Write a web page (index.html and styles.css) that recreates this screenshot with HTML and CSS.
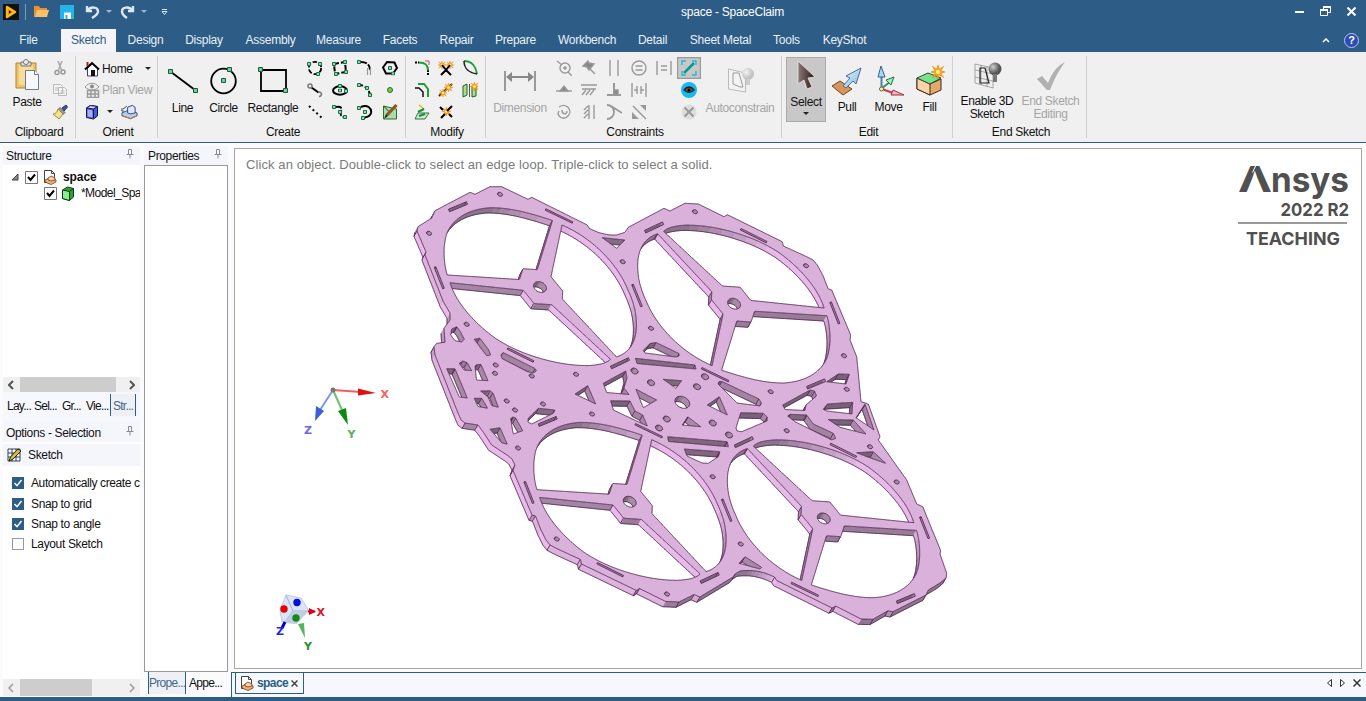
FILE: index.html
```html
<!DOCTYPE html>
<html lang="en">
<head>
<meta charset="utf-8">
<title>space - SpaceClaim</title>
<link rel="stylesheet" href="styles.css">
</head>
<body>
<svg class="defs" width="0" height="0" aria-hidden="true">
  <defs>
    <linearGradient id="cursorFill" x1="0" y1="0" x2="1" y2="0"><stop offset="0" stop-color="#8a7a78"/><stop offset="1" stop-color="#2a1614"/></linearGradient>
    <linearGradient id="blueFill" x1="0" y1="0" x2="1" y2="1"><stop offset="0" stop-color="#eaf8ff"/><stop offset="1" stop-color="#7fb4dc"/></linearGradient>
    <radialGradient id="bulbFill" cx=".35" cy=".35"><stop offset="0" stop-color="#d0d0d0"/><stop offset="1" stop-color="#555"/></radialGradient>
    <radialGradient id="bulbPale" cx=".35" cy=".35"><stop offset="0" stop-color="#f4f4f4"/><stop offset="1" stop-color="#c4c4c4"/></radialGradient>
    <symbol id="doc" viewBox="0 0 16 16"><path d="M2.500 1.500h7l3 3v9h-10z" fill="#fff" stroke="#444"/><path d="M9.500 1.500v3h3" fill="none" stroke="#444"/><path d="M3 11l5-2.500 6 2.500v2l-5 2.500-6-2.500z" fill="#f0b27c" stroke="#6b3f18" stroke-width=".8"/><path d="M6 9l3-2 4 2v2l-4 1-3-1z" fill="#fbd0a6" stroke="#6b3f18" stroke-width=".8"/></symbol>
    <symbol id="pin" viewBox="0 0 8 10"><path d="M2.500.5h3v5h-3zM.5 5.500h7M4 5.500v4" fill="none" stroke="#8a8a94"/></symbol>
    <symbol id="tick" viewBox="0 0 13 13"><path d="M.5.5h12v12H.5z" fill="#fff" stroke="#777"/><path d="M3 6l2.500 3L10 3.500" fill="none" stroke="#000" stroke-width="2"/></symbol>
    <symbol id="tickBlue" viewBox="0 0 12 12"><path d="M0 0h12v12H0z" fill="#2d5c86"/><path d="M2.500 6l2.500 2.700L9.500 3" fill="none" stroke="#fff" stroke-width="1.500"/></symbol>
    <symbol id="spark" viewBox="0 0 10 10"><path d="M5 0l1 3 3-2-2 3 3 1-3 1 2 3-3-2-1 3-1-3-3 2 2-3-3-1 3-1-2-3 3 2z" fill="#ffa51e" stroke="#e07800" stroke-width=".4"/><circle cx="5" cy="5" r="1.500" fill="#fff27a"/></symbol>
    <symbol id="dot" viewBox="0 0 4 4"><path d="M.5.5h3v3h-3z" fill="#7fe0b0" stroke="#1c6b45"/></symbol>
  </defs>
</svg>
<div class="app">
  <header class="titlebar">
    <div class="quick">
      <svg width="16" height="16" viewBox="0 0 16 16"><path d="M0 0h16v16H0z" fill="#111"/><path d="M4 3L12 8l-8 5z" fill="#e08a00" stroke="#ffb71b" stroke-width="2.400" stroke-linejoin="round"/><path d="M6 6.500l2.500 1.500L6 9.500z" fill="#111"/></svg>
      <i class="bar"></i>
      <svg width="15" height="13" viewBox="0 0 15 13"><path d="M0 1h5l1 2h7v9H0z" fill="#e8942c"/><path d="M3 5h12l-2 7H1z" fill="#fbbf6e"/></svg>
      <svg class="save" width="14" height="14" viewBox="0 0 14 14"><path d="M0 0h14v14H0z" fill="#22b4ea"/><path d="M4 7.500h7V14H4z" fill="#fff"/><path d="M5.500 10h2v4h-2z" fill="#22b4ea"/></svg>
      <svg class="undo" width="15" height="14" viewBox="0 0 15 14"><path d="M2 1v5h5M2.500 5.500C6 1 13 2 13 6.500c0 3-2.500 4.500-6 6.500" fill="none" stroke="#dce9f5" stroke-width="2.400"/></svg>
      <i class="caret"></i>
      <svg class="redo" width="15" height="14" viewBox="0 0 15 14"><path d="M13 1v5H8M12.500 5.500C9 1 2 2 2 6.500c0 3 2 4.500 5 6.500" fill="none" stroke="#dce9f5" stroke-width="2.400"/></svg>
      <i class="caret"></i>
      <svg class="more" width="7" height="6" viewBox="0 0 7 6"><path d="M1 .5h5M1 2.500h5l-2.500 3z" fill="none" stroke="#dce9f5"/></svg>
    </div>
    <h1 class="title">space - SpaceClaim</h1>
    <div class="wincontrols">
      <svg width="9" height="11" viewBox="0 0 9 11"><path d="M0 5h9v2H0z" fill="#fff"/></svg>
      <svg width="11" height="10" viewBox="0 0 11 10"><path d="M3.500 3V.5h7v6H8M.5 3.500h7v6h-7z" fill="none" stroke="#fff"/><path d="M3 1h8M0 4h8" stroke="#fff" stroke-width="2"/></svg>
      <svg width="9" height="9" viewBox="0 0 9 9"><path d="M.5.5l8 8M8.500.5l-8 8" stroke="#fff" stroke-width="2"/></svg>
    </div>
  </header>
  <nav class="tabs">
    <a class="tab t-file">File</a><a class="tab t-sketch active">Sketch</a><a class="tab t-design">Design</a><a class="tab t-display">Display</a><a class="tab t-assembly">Assembly</a><a class="tab t-measure">Measure</a><a class="tab t-facets">Facets</a><a class="tab t-repair">Repair</a><a class="tab t-prepare">Prepare</a><a class="tab t-work">Workbench</a><a class="tab t-detail">Detail</a><a class="tab t-sheet">Sheet Metal</a><a class="tab t-tools">Tools</a><a class="tab t-key">KeyShot</a>
    <div class="help">
      <svg width="8" height="5" viewBox="0 0 8 5"><path d="M1 4l3-3 3 3" fill="none" stroke="#fff" stroke-width="1.500"/></svg>
      <span class="helpball">?</span>
    </div>
  </nav>

  <section class="ribbon">
    <div class="group g-clip">
      <div class="content">
        <div class="big paste"><svg width="26" height="32" viewBox="0 0 26 32"><path d="M2 4h20v25H2z" fill="#eec36b" stroke="#b0872f"/><path d="M5 6h14v20H5z" fill="#f8dc9a"/><path d="M7 3h10v4H7z" fill="#ddd" stroke="#777"/><circle cx="12" cy="3" r="2.500" fill="#f0f0f0" stroke="#777"/><path d="M11.500 11.500h9l4 4v15h-13z" fill="#f5f9ff" stroke="#6c7c96"/><path d="M20.500 11.500v4h4" fill="#fff" stroke="#6c7c96"/></svg><span>Paste</span></div>
        <div class="smallcol">
          <svg width="16" height="16" viewBox="0 0 16 16"><path d="M6 1l3.500 9M10 1L6.500 10" stroke="#aaa" stroke-width="1.500"/><circle cx="5" cy="12.500" r="2" fill="none" stroke="#999" stroke-width="1.500"/><circle cx="11" cy="12" r="2" fill="none" stroke="#999" stroke-width="1.500"/></svg>
          <svg width="16" height="16" viewBox="0 0 16 16"><path d="M1.500 2.500h7l2 2v7h-9zM6.500 5.500h6l2 2v6h-8z" fill="#f4f4f4" stroke="#bbb"/><path d="M3 6h3M3 8h3M8.500 9h4M8.500 11h4" stroke="#bbb"/></svg>
          <svg width="16" height="16" viewBox="0 0 16 16"><path d="M10 4l4-3 1.500 2L12 7z" fill="#4054a0" stroke="#26336b"/><path d="M8 3.500l5 5-2 2-5-5z" fill="#999" stroke="#666"/><path d="M6 5l5 5-4 5-6-5c3 0 4-2 5-5z" fill="#f5e08c" stroke="#a5883a"/></svg>
        </div>
      </div>
      <div class="label">Clipboard</div>
    </div>
    <div class="group g-orient">
      <div class="content col">
        <div class="row"><svg width="16" height="16" viewBox="0 0 16 16"><path d="M3.500 7v8h10V7L8.500 3z" fill="#fff" stroke="#333a8a"/><path d="M1 8.500L8 2l7 6.500" fill="none" stroke="#000" stroke-width="2"/><path d="M3.500 1v4" stroke="#b02020" stroke-width="2"/><path d="M7 9h4v6H7z" fill="#111"/></svg><span>Home</span><i class="dn d1"></i></div>
        <div class="row dim"><svg width="16" height="16" viewBox="0 0 16 16"><path d="M1 5c4-5 10-5 14 0-4 4-10 4-14 0z" fill="none" stroke="#999"/><circle cx="8" cy="4.500" r="2" fill="#888"/><path d="M3.500 8.500h11v7h-11zM7 8v7M11 8v7M3 12h11" fill="none" stroke="#999" stroke-width="1.500"/></svg><span>Plan View</span></div>
        <div class="row"><svg width="16" height="16" viewBox="0 0 16 16"><path d="M2.500 4l4-2.500 7 1V12l-4 3-7-1.500z" fill="#4a58d8" stroke="#15154f"/><path d="M2.500 4l7 1 4-2.500-7-1z" fill="#c8d0ff" stroke="#15154f"/><path d="M9.500 5v9.500" stroke="#15154f"/><path d="M3.500 5.500l5 1v7l-5-1z" fill="#a5aef5"/></svg><i class="dn"></i><svg class="scan" width="17" height="16" viewBox="0 0 18 16"><path d="M1 9l7-3 9 3v3l-7 3-9-3z" fill="#b5cfe8" stroke="#334a78"/><path d="M7 3l5-2 3 2v6l-5 1-3-1z" fill="#dfe8ff" stroke="#2b3f9a"/><path d="M2 5l4-3M3 7H1V4" fill="none" stroke="#333"/><path d="M2 12l8 3 7-3" fill="none" stroke="#c87a3a"/></svg></div>
      </div>
      <div class="label">Orient</div>
    </div>
    <div class="group g-create">
      <div class="content">
        <div class="big b-line"><svg width="32" height="32" viewBox="0 0 32 32"><path d="M4 7l24 18" stroke="#000" stroke-width="1.800"/><path d="M1.500 4.500h4v4h-4zM26.500 23.500h4v4h-4z" fill="#6ad09c" stroke="#1c5b3d"/></svg><span>Line</span></div>
        <div class="big b-circle"><svg width="32" height="32" viewBox="0 0 32 32"><circle cx="15.500" cy="16" r="12.300" fill="none" stroke="#000" stroke-width="1.800"/><path d="M19.500 2.500h4v4h-4zM13.500 13.500h4v4h-4z" fill="#6ad09c" stroke="#1c5b3d"/></svg><span>Circle</span></div>
        <div class="big b-rect"><svg width="32" height="32" viewBox="0 0 32 32"><path d="M4 5h25v21H4z" fill="none" stroke="#000" stroke-width="1.800"/><path d="M1.500 2.500h4v4h-4zM26.500 23.500h4v4h-4z" fill="#6ad09c" stroke="#1c5b3d"/></svg><span>Rectangle</span></div>
        <div class="icons c4">
          <svg viewBox="0 0 16 16"><circle cx="8" cy="8" r="6.200" fill="none" stroke="#000" stroke-width="1.800" stroke-dasharray="4.500 2"/><use href="#dot" x="0" y="2" width="4" height="4"/><use href="#dot" x="11" y="2" width="4" height="4"/><use href="#dot" x="9" y="12" width="4" height="4"/></svg>
          <svg viewBox="0 0 16 16"><path d="M2 4l11-2 1 10-11 2z" fill="none" stroke="#000" stroke-width="2" stroke-dasharray="5 2"/><use href="#dot" x="0" y="2" width="4" height="4"/><use href="#dot" x="11" y="0" width="4" height="4"/><use href="#dot" x="12" y="10" width="4" height="4"/><use href="#dot" x="2" y="12" width="4" height="4"/></svg>
          <svg viewBox="0 0 16 16"><path d="M4 2c6 0 9 3 9 8" fill="none" stroke="#000" stroke-width="2" stroke-dasharray="6 1.500"/><path d="M10.500 8v7M13.500 8v7" stroke="#999" stroke-width="1.200"/><use href="#dot" x="0" y="0" width="4" height="4"/></svg>
          <svg viewBox="0 0 16 16"><path d="M5 2l7.500.5L15 8l-4 5.500H4L1 7.500z" fill="none" stroke="#000" stroke-width="2"/><use href="#dot" x="6" y="6" width="4" height="4"/><use href="#dot" x="9" y="11.500" width="4" height="4"/></svg>
          <svg viewBox="0 0 16 16"><path d="M4.500 5.500l7 5" stroke="#000" stroke-width="2"/><circle cx="3" cy="4" r="2" fill="none" stroke="#777" stroke-width="1.500"/><path d="M12 14.500a2.200 2.200 0 1 0-1-4" fill="none" stroke="#777" stroke-width="1.600"/></svg>
          <svg viewBox="0 0 16 16"><ellipse cx="8" cy="8.500" rx="7" ry="4.200" fill="none" stroke="#000" stroke-width="2"/><use href="#dot" x="6" y="2" width="4" height="4"/><use href="#dot" x="6" y="6.500" width="4" height="4"/><use href="#dot" x="12" y="7" width="4" height="4"/></svg>
          <svg viewBox="0 0 16 16"><path d="M2 3c6 0 10 4 11 10" fill="none" stroke="#000" stroke-width="2" stroke-dasharray="4 2"/><use href="#dot" x="0" y="1" width="4" height="4"/><use href="#dot" x="8" y="4" width="4" height="4"/><use href="#dot" x="11" y="11" width="4" height="4"/></svg>
          <svg viewBox="0 0 16 16"><circle cx="8" cy="8" r="2.500" fill="#74c95e" stroke="#2c6a2a"/></svg>
          <svg viewBox="0 0 16 16"><path d="M2 2l13 12" stroke="#000" stroke-width="2" stroke-dasharray="2 3"/></svg>
          <svg viewBox="0 0 16 16"><path d="M4 3c5-1 6 1 5 4-1 4 0 6 4 6" fill="none" stroke="#000" stroke-width="2" stroke-dasharray="6 1.500"/><use href="#dot" x="0" y="1" width="4" height="4"/><use href="#dot" x="6" y="6" width="4" height="4"/><use href="#dot" x="11" y="11" width="4" height="4"/></svg>
          <svg viewBox="0 0 16 16"><path d="M4 3c6-3 11 1 10 6-1 3-3 4-6 4.500" fill="none" stroke="#000" stroke-width="2"/><use href="#dot" x="0" y="2" width="4" height="4"/><use href="#dot" x="6" y="6" width="4" height="4"/><use href="#dot" x="4" y="12" width="4" height="4"/></svg>
          <svg viewBox="0 0 16 16"><path d="M1.500 2l13 3v10h-13z" fill="#a8dca8" stroke="#2f6b35"/><path d="M1.500 2l6 6" stroke="#333"/><path d="M14.500 1L5 11" stroke="#8a5a20" stroke-width="3.200"/><path d="M6 12l-4 3 2-5z" fill="#222"/></svg>
        </div>
      </div>
      <div class="label">Create</div>
    </div>
    <div class="group g-modify">
      <div class="content">
        <div class="icons c3">
          <svg viewBox="0 0 16 16"><path d="M1 2.500h4M14 10v5" stroke="#000" stroke-width="2" stroke-dasharray="2 1"/><path d="M5 2.500c6 0 9 2 9 8" fill="none" stroke="#239b3b" stroke-width="2"/><path d="M11 1h4v4" fill="none" stroke="#c46"/></svg>
          <svg viewBox="0 0 16 16"><use href="#spark" x="0" y="1" width="8" height="8"/><use href="#spark" x="8" y="1" width="8" height="8"/><path d="M3 15l4-4 2 0 4 4M4 5l4 5 4-5" fill="none" stroke="#000" stroke-width="2"/></svg>
          <svg viewBox="0 0 16 16"><path d="M2 1c8 0 12 6 13 13" fill="none" stroke="#239b3b" stroke-width="2"/><path d="M2 1c0 8 6 12 13 13" fill="none" stroke="#222" stroke-width="1.500"/></svg>
          <svg viewBox="0 0 16 16"><path d="M4 2h6l4 5v8" fill="none" stroke="#239b3b" stroke-width="2"/><path d="M1 6h4l4 4v5" fill="none" stroke="#111" stroke-width="1.500"/></svg>
          <svg viewBox="0 0 16 16"><path d="M1 14L14 2" stroke="#222" stroke-width="2"/><use href="#spark" x="6" y="1" width="9" height="9"/><use href="#spark" x="1" y="7" width="8" height="8"/></svg>
          <svg viewBox="0 0 16 16"><path d="M1 4l4-2v11l-4 2zM10 5l4-1v10l-4 1z" fill="#a7e08a" stroke="#24612b"/><path d="M7.500 2v13" stroke="#555"/><use href="#spark" x="8" y="0" width="9" height="9"/></svg>
          <svg viewBox="0 0 16 16"><path d="M4 9h11l-4 6H1z" fill="#cdeccb" stroke="#347541"/><path d="M5 1l5 4" stroke="#e5b800" stroke-width="1.500"/><path d="M4 8l6-3M5 12l6-2" stroke="#179138" stroke-width="2"/></svg>
          <svg viewBox="0 0 16 16"><use href="#spark" x="4" y="3" width="9" height="9"/><path d="M2 3l3 3M11 10l3 3M3 14l4-4M9 7l5-5" stroke="#000" stroke-width="2"/></svg>
        </div>
      </div>
      <div class="label">Modify</div>
    </div>
    <div class="group g-con">
      <div class="content">
        <div class="big b-dim dim"><svg width="34" height="32" viewBox="0 0 34 32"><path d="M2 6v20M32 6v20" stroke="#999" stroke-width="2"/><path d="M6 12h22" stroke="#888" stroke-width="2"/><path d="M3 12l6-5v10zM31 12l-6-5v10z" fill="#888"/></svg><span>Dimension</span></div>
        <div class="icons c6 grey">
          <svg viewBox="0 0 16 16"><path d="M1 1l5 4M12 12l4 4"/><circle cx="9" cy="8" r="5"/><path d="M7 8h4M9 6v4"/></svg>
          <svg viewBox="0 0 16 16"><path d="M8 8l6 6"/><path d="M2 6l5-5 1 2 5 1-5 6-2-3z" fill="#888"/></svg>
          <svg viewBox="0 0 16 16"><path d="M4 0v16M12 0v16"/></svg>
          <svg viewBox="0 0 16 16"><circle cx="8" cy="8" r="7"/><path d="M4.500 6h7M4.500 10h7"/></svg>
          <svg viewBox="0 0 16 16"><path d="M1 1v14M15 1v14M5 6h6M5 10h6"/></svg>
          <svg class="lit" viewBox="0 0 24 22"><path d="M.5.5h23v21H.5z" fill="#c8c8c8" stroke="#999"/><path d="M5 8V4h4M15 4h4v4M19 14v4h-4M9 18H5v-4" stroke="#24b9cc"/><path d="M7 16L17 6" stroke="#009a9a" stroke-width="2.500"/></svg>
          <svg viewBox="0 0 16 16"><path d="M0 9h16"/><path d="M4 9l4-5 4 5z" fill="#888"/></svg>
          <svg viewBox="0 0 16 16"><path d="M0 3h16M1 7h14M5 8l-4 5M9 8l-4 5M13 8l-4 5"/></svg>
          <svg viewBox="0 0 16 16"><path d="M1 13h14M8 1v12" stroke-width="2"/><path d="M8 8h4v5H8z" fill="#888"/></svg>
          <svg viewBox="0 0 16 16"><path d="M1 1v14M15 1v14M6 4v8M10 4v8M3 8h3M10 8h3"/></svg>
          <i></i>
          <svg viewBox="0 0 16 16"><circle cx="8" cy="8" r="8" fill="#19b8f0" stroke="none"/><path d="M3 8c3-4 7-4 10 0-3 3-7 3-10 0z" fill="#7a5636" stroke="#123"/><circle cx="8" cy="8" r="1.500" fill="#000" stroke="none"/></svg>
          <svg viewBox="0 0 16 16"><path d="M3 3c8-5 14 4 9 9-5 5-12 0-9-5M6 6c0 5 5 5 5 1"/></svg>
          <svg viewBox="0 0 16 16"><path d="M8 1v14M13 1v14M7 2L3 6M7 6l-4 4M7 10l-4 4"/></svg>
          <svg viewBox="0 0 16 16"><path d="M1 1c4 0 7 3 7 7s-3 7-7 7M5 2l11 7" stroke-width="1.800"/></svg>
          <svg viewBox="0 0 16 16"><path d="M2 2l13 13"/><path d="M1 8v7h7zM9 1h6v6z" fill="#999" stroke="none"/></svg>
          <i></i>
          <svg viewBox="0 0 16 16"><circle cx="8" cy="8" r="7.500" fill="#ddd" stroke="none"/><path d="M3.500 3.500l9 9M12.500 3.500l-9 9" stroke-width="2"/></svg>
        </div>
        <div class="big b-auto dim"><svg width="32" height="32" viewBox="0 0 32 32"><path d="M4.500 4l17 4v19l-17-3z" fill="#f3f3f3" stroke="#bbb"/><path d="M9 8h6l4 14h-3L9 19z" fill="none" stroke="#999"/><circle cx="24" cy="9" r="6" fill="url(#bulbPale)"/><path d="M22 14h4v6h-4z" fill="#ccc"/></svg><span>Autoconstrain</span></div>
      </div>
      <div class="label">Constraints</div>
    </div>
    <div class="group g-edit">
      <div class="content">
        <div class="big b-select"><svg width="32" height="32" viewBox="0 0 32 32"><path d="M8 1v23l6-4 3 9 5-2-4-9 7-1z" fill="url(#cursorFill)" stroke="#f4e4de" stroke-width=".8"/></svg><span>Select</span><i class="dn"></i></div>
        <div class="big b-pull"><svg width="32" height="32" viewBox="0 0 32 32"><path d="M1 21l8-5 12 8-9 6z" fill="#d6955a" stroke="#75431c"/><path d="M12 21l7-8-4-2L30 3l-5 16-3-3-7 7z" fill="url(#blueFill)" stroke="#4b6e96"/></svg><span>Pull</span></div>
        <div class="big b-move"><svg width="32" height="32" viewBox="0 0 32 32"><path d="M8.500 24V10" stroke="#4d7faa" stroke-width="2"/><path d="M5 12L8 1l4 11z" fill="#a8d8f5" stroke="#365e8a"/><path d="M9 23l8-6" stroke="#35965a" stroke-width="2"/><path d="M13 15l8-3-3 8z" fill="#a2ecb6" stroke="#20733e"/><path d="M9 24l11 4" stroke="#c03c55" stroke-width="2"/><path d="M20 25l11 5-13 0z" fill="#f6b5bd" stroke="#a22a42"/><circle cx="8.500" cy="24" r="2" fill="#ff9" stroke="#663"/></svg><span>Move</span></div>
        <div class="big b-fill"><svg width="32" height="32" viewBox="0 0 32 32"><path d="M3 13v11l13 6 11-5V14l-11 5z" fill="#e6a66c" stroke="#3a2a18"/><path d="M3 13l13 6v11L3 24z" fill="#fcd3a9" stroke="#3a2a18"/><path d="M3 13l11-5 13 5-11 6z" fill="#7be08c" stroke="#22552c"/><use href="#spark" x="17" y="0" width="14" height="14"/></svg><span>Fill</span></div>
      </div>
      <div class="label">Edit</div>
    </div>
    <div class="group g-end">
      <div class="content">
        <div class="big b-enable"><svg width="32" height="30" viewBox="0 0 32 30"><path d="M4 3l18 4v20L4 22zM4 9l18 4M4 16l18 4M10 4v20M16 6v20" fill="#eee" stroke="#888" stroke-width=".7"/><path d="M9 7h5l4 15H9z" fill="none" stroke="#222" stroke-width="1.200"/><circle cx="24" cy="8" r="6.500" fill="url(#bulbFill)"/><path d="M22 13h4v8h-4z" fill="#777"/></svg><span>Enable 3D<br>Sketch</span></div>
        <div class="big b-endsk dim"><svg width="32" height="30" viewBox="0 0 32 30"><path d="M2 18l5-3 6 7C17 12 22 5 30 1c-6 8-11 17-15 28h-3z" fill="#b0b0b0"/></svg><span>End Sketch<br>Editing</span></div>
      </div>
      <div class="label">End Sketch</div>
    </div>
  </section>

  <main class="work">
    <aside class="left">
      <div class="phead"><span>Structure</span><svg width="8" height="10"><use href="#pin"/></svg></div>
      <div class="tree">
        <div class="node root"><svg width="8" height="8" viewBox="0 0 8 8"><path d="M7 1v6H1z" fill="#888" stroke="#444"/></svg><svg class="ck" width="13" height="13"><use href="#tick"/></svg><svg width="16" height="16"><use href="#doc"/></svg><b>space</b></div>
        <div class="node child"><svg class="ck" width="13" height="13"><use href="#tick"/></svg><svg width="14" height="15" viewBox="0 0 14 15"><path d="M1.500 4l5-3 6 1.500V11l-4 3.500-7-2z" fill="#2f9e3c" stroke="#0c3d12"/><path d="M1.500 4l7 1.500v9l-7-2z" fill="#8deb92" stroke="#0c3d12"/><path d="M8.500 5.500l4-3" stroke="#0c3d12"/></svg><span>*Model_Spa</span></div>
      </div>
      <div class="hscroll"><svg width="6" height="10" viewBox="0 0 6 10"><path d="M5 1L1 5l4 4" fill="none" stroke="#555" stroke-width="2"/></svg><i class="thumb w96"></i><svg class="rt" width="6" height="10" viewBox="0 0 6 10"><path d="M1 1l4 4-4 4" fill="none" stroke="#555" stroke-width="2"/></svg></div>
      <div class="ptabs"><span>Lay...</span><span>Sel...</span><span>Gr...</span><span>Vie...</span><span class="on">Str...</span></div>
      <div class="phead opt"><span>Options - Selection</span><svg width="8" height="10"><use href="#pin"/></svg></div>
      <div class="sketchrow"><svg width="15" height="14" viewBox="0 0 15 14"><path d="M1 1h12v12H1zM1 5h12M1 9h12M5 1v12M9 1v12" fill="#fff" stroke="#333a66"/><path d="M2 13l1.500-4L11 1l3 2-8 8z" fill="#d9c422" stroke="#222"/></svg><span>Sketch</span></div>
      <div class="opts">
        <label><svg width="12" height="12"><use href="#tickBlue"/></svg><span>Automatically create c</span></label>
        <label><svg width="12" height="12"><use href="#tickBlue"/></svg><span>Snap to grid</span></label>
        <label><svg width="12" height="12"><use href="#tickBlue"/></svg><span>Snap to angle</span></label>
        <label><i class="empty"></i><span>Layout Sketch</span></label>
      </div>
      <div class="hscroll low"><svg width="6" height="10" viewBox="0 0 6 10"><path d="M5 1L1 5l4 4" fill="none" stroke="#999" stroke-width="1.500"/></svg><i class="thumb w72"></i><svg class="rt" width="6" height="10" viewBox="0 0 6 10"><path d="M1 1l4 4-4 4" fill="none" stroke="#999" stroke-width="1.500"/></svg></div>
    </aside>
    <aside class="props">
      <div class="phead"><span>Properties</span><svg width="8" height="10"><use href="#pin"/></svg></div>
      <div class="propbox"></div>
      <div class="ptabs2"><span class="on">Prope...</span><span>Appe...</span></div>
    </aside>
    <section class="docs">
      <div class="viewport">
        <svg class="scene" viewBox="236 150 1124 517" width="1124" height="517">
          <g id="part"></g>
          <g class="triad">
            <path d="M333 390l28 2" stroke="#f06060" stroke-width="2"/><path d="M358 388.500l18 4.500-18 2.500z" fill="#e01010"/>
            <path d="M333 390l-13 20" stroke="#7c98e8" stroke-width="2"/><path d="M316 406l8 5-9 10z" fill="#3a5fd8"/>
            <path d="M333 390l9 20" stroke="#6cc06c" stroke-width="2"/><path d="M338 411l8-3 2 17z" fill="#0b8a12"/>
            <circle cx="333" cy="390" r="2.500" fill="#777"/>
            <text x="380.500" y="398" fill="#f26060">X</text><text x="304" y="434" fill="#6868ee">Z</text><text x="347.500" y="438" fill="#62ad62">Y</text>
          </g>
          <g class="triad">
            <path d="M286 595l15 3 8 13-14 12-13-1-2-12z" fill="#dbe5fa" stroke="#a8b7d8" stroke-width=".7"/><path d="M286 595l7 16 15 0M293 611l-9 12" fill="none" stroke="#93a4cf" stroke-width=".8"/><path d="M293 611h15l-11 13-13-1z" fill="#c3cde0"/>
            <circle cx="284" cy="609" r="3.700" fill="#e60000"/><circle cx="297" cy="602.500" r="3.700" fill="#0010e0"/><circle cx="296" cy="618" r="3.700" fill="#148a1c"/>
            <path d="M308 611.500l7 0" stroke="#d00" stroke-width="2"/><path d="M309 608l7 3.500-7 3.500z" fill="#d8001a"/><path d="M285 622l-3 6" stroke="#00c" stroke-width="3"/><path d="M298 624l6-1 1 15z" fill="#55b45c"/>
            <text x="316.500" y="616" fill="#dc1427">X</text><text x="276" y="635" fill="#2424dc">Z</text><text x="304" y="650" fill="#279136">Y</text>
          </g>
          <g class="brand" role="img" aria-label="Ansys 2022 R2 Teaching">
            <text x="1238" y="192" class="b1" textLength="34" lengthAdjust="spacingAndGlyphs">Λ</text>
            <path d="M1256 165l-3.500 7.500" stroke="#fff" stroke-width="1"/>
            <text x="1271" y="192" class="b1" textLength="78" lengthAdjust="spacingAndGlyphs">nsys</text>
            <text x="1280.500" y="215.500" class="b2" textLength="68.500" lengthAdjust="spacingAndGlyphs">2022 R2</text>
            <path d="M1238 223h109" stroke="#777" stroke-width="1.500"/>
            <text x="1246" y="244.500" class="b3" textLength="94" lengthAdjust="spacingAndGlyphs">TEACHING</text>
          </g>
        </svg>
        <p class="prompt">Click an object. Double-click to select an edge loop. Triple-click to select a solid.</p>
      </div>
      <div class="doctabs">
        <div class="doctab"><svg width="16" height="16"><use href="#doc"/></svg><b>space</b><svg width="7" height="7" viewBox="0 0 7 7"><path d="M.5.5l6 6M6.500.5l-6 6" stroke="#444" stroke-width="1.500"/></svg></div>
        <div class="docnav"><svg width="5" height="8" viewBox="0 0 5 8"><path d="M4.500.5v7L.5 4z" fill="none" stroke="#333"/></svg><svg width="5" height="8" viewBox="0 0 5 8"><path d="M.5.5v7l4-3.500z" fill="none" stroke="#333"/></svg><svg width="8" height="8" viewBox="0 0 8 8"><path d="M.5.5l7 7M7.500.5l-7 7" stroke="#333" stroke-width="1.500"/></svg></div>
      </div>
    </section>
  </main>
  <footer class="status"></footer>
</div>
<script src="part.js"></script>
</body>
</html>
```
FILE: styles.css
```css
* { box-sizing: border-box; }
body { margin: 0; font: 12px/14px "Liberation Sans", Arial, sans-serif; letter-spacing: -0.35px; color: #111; overflow: hidden; }
svg { display: block; flex: none; }
.defs { position: absolute; }
.app { width: 1366px; height: 701px; display: flex; flex-direction: column; background: #f7f8fd; }

.titlebar { height: 28px; background: #2d5c86; display: grid; grid-template-columns: 600px 265px 1fr; }
.quick { display: flex; align-items: center; height: 23px; padding-left: 3px; }
.quick .bar { width: 1px; height: 16px; background: #7d9cba; margin: 0 8px 0 6px; }
.quick .save { margin-left: 11px; }
.quick .undo { margin-left: 11px; }
.quick .redo { margin-left: 8px; }
.quick .more { margin-left: 14px; }
.caret { border: 3px solid transparent; border-top-color: #9fb6cc; border-bottom: 0; margin-left: 6px; }
.title { margin: 0; font: inherit; letter-spacing: -0.25px; color: #fff; text-align: center; line-height: 24px; }
.wincontrols { display: flex; justify-content: flex-end; align-items: center; height: 22px; gap: 16px; padding-right: 10px; }

.tabs { height: 24px; background: #2d5c86; display: flex; color: #e9f0f7; line-height: 23px; letter-spacing: -0.25px; }
.tab { text-align: center; height: 23px; margin-top: 1px; flex: none; }
.tab.active { background: #f4f4f8; color: #2d5c86; }
.t-file { width: 57px; } .t-sketch { width: 55px; margin-left: 4px; } .t-design { width: 59px; } .t-display { width: 58px; }
.t-assembly { width: 75px; } .t-measure { width: 61px; } .t-facets { width: 62px; } .t-repair { width: 51px; }
.t-prepare { width: 67px; } .t-work { width: 76px; } .t-detail { width: 55px; } .t-sheet { width: 81px; }
.t-tools { width: 51px; } .t-key { width: 65px; }
.help { margin-left: auto; display: flex; align-items: center; gap: 14px; padding-right: 7px; }
.helpball { width: 15px; height: 15px; border: 1px solid #b9c7e6; border-radius: 50%; background: #2c4ab8; color: #fff; font: bold 11px/13px "Liberation Sans", sans-serif; text-align: center; }

.ribbon { height: 91px; background: #f0f0f0; border-bottom: 1px solid #2d5c86; display: flex; }
.group { display: grid; grid-template-rows: 72px 18px; position: relative; flex: none; }
.group::after { content: ""; position: absolute; right: 0; top: 4px; bottom: 4px; width: 1px; background: #cfcfcf; }
.g-clip { width: 76px; } .g-orient { width: 82px; } .g-create { width: 248px; } .g-modify { width: 80px; }
.g-con { width: 296px; } .g-edit { width: 171px; } .g-end { width: 134px; }
.label { text-align: center; line-height: 16px; padding-left: 2px; letter-spacing: -0.3px; }
.content { display: flex; }
.big { display: flex; flex-direction: column; align-items: center; flex: none; text-align: center; padding-top: 13px; white-space: nowrap; }
.big span { margin-top: 4px; }
.dim { color: #a5a5a5; }
.paste { width: 54px; padding-top: 7px; }
.smallcol { display: flex; flex-direction: column; gap: 6px; padding-top: 8px; margin-left: -2px; }
.col { flex-direction: column; padding: 6px 0 0 8px; }
.row { display: flex; align-items: center; height: 21.500px; gap: 2px; white-space: nowrap; }
.dn { border: 3px solid transparent; border-top-color: #222; border-bottom: 0; flex: none; }
.row .dn { margin-left: 5px; } .row .d1 { margin-left: 10px; }
.scan { margin-left: 6px; }
.b-line { width: 41px; margin-left: 4px; } .b-circle { width: 41px; } .b-rect { width: 58px; }
.icons { display: grid; grid-auto-rows: 22px; align-content: start; justify-items: center; align-items: center; padding-top: 5px; }
.icons svg { width: 16px; height: 16px; }
.c4 { grid-template-columns: repeat(4, 25px); } 
.c3 { grid-template-columns: repeat(3, 24px); margin-left: 4px; }
.c6 { grid-template-columns: repeat(6, 25px); margin-left: -1px; }
.grey svg { fill: none; stroke: #999; stroke-width: 1.400; }
.icons svg.lit { width: 24px; height: 22px; }
.b-dim { width: 66px; padding-left: 2px; } .b-dim svg { margin-left: -1px; } .b-auto { width: 78px; }
.b-select { width: 40px; height: 65px; margin: 5px 0 0 4px; background: #c8c8c8; border: 1px solid #aaa; padding-top: 2px; }
.b-select span { margin-top: 3px; }
.b-select .dn { margin-top: 3px; }
.b-pull { width: 42px; } .b-move { width: 41px; } .b-fill { width: 41px; }
.b-pull span, .b-move span, .b-fill span { margin-top: 3px; }
.b-enable { width: 68px; } .b-endsk { width: 59px; }
.b-enable, .b-endsk { padding-top: 9px; line-height: 13px; }

.work { height: 554px; display: flex; background: #fbfbfe; }
.left { width: 137px; margin-left: 3px; padding-top: 3px; display: flex; flex-direction: column; overflow: hidden; background: #fff; }
.phead { height: 19px; background: #f5f6fc; display: flex; justify-content: space-between; padding: 3px 6px 0 3px; flex: none; line-height: 15px; }
.tree { height: 212px; padding: 4px 0 0 8px; background: #fff; }
.node { display: flex; align-items: center; height: 16px; white-space: nowrap; }
.root .ck { margin: 0 4px 0 6px; } .root b { margin-left: 5px; letter-spacing: -0.1px; }
.child { margin-left: 33px; } .child .ck { margin-right: 4px; } .child span { margin-left: 6px; letter-spacing: -0.55px; }
.hscroll { height: 15px; background: #f0f0f0; display: flex; align-items: center; padding: 0 5px; flex: none; }
.thumb { height: 100%; background: #cdcdcd; margin-left: 6px; }
.w96 { width: 96px; } .w72 { width: 72px; }
.rt { margin-left: auto; }
.ptabs { height: 30px; background: #f7f8fd; display: flex; line-height: 24px; padding: 2px 0 0 4px; flex: none; align-items: flex-start; }
.ptabs span { white-space: nowrap; height: 22px; letter-spacing: -0.75px; }
.ptabs span:nth-child(1) { width: 27px; } .ptabs span:nth-child(2) { width: 28px; } .ptabs span:nth-child(3) { width: 24px; } .ptabs span:nth-child(4) { width: 24px; }
.ptabs .on, .ptabs2 .on { color: #44688c; background: #eef0f4; border: solid #2d5c86; border-width: 0 1px; }
.ptabs .on { padding: 0 2px; width: 26px; }
.opt { height: 20px; padding-top: 4px; }
.sketchrow { height: 22px; margin-top: 2px; background: #f5f6fc; display: flex; align-items: center; gap: 6px; padding-left: 4px; flex: none; }
.opts { padding: 7px 0 0 9px; height: 213px; flex: none; }
.opts label { display: flex; align-items: center; height: 20.400px; gap: 7px; white-space: nowrap; }
.opts label:first-child { letter-spacing: -0.4px; }
.empty { width: 12px; height: 12px; border: 1px solid #999; background: #fff; flex: none; }
.low { height: 17px; }
.props { width: 84px; margin-left: 4px; padding-top: 3px; display: flex; flex-direction: column; flex: none; }
.propbox { height: 507px; border: 1px solid #9a9a9a; background: #fff; flex: none; }
.props .phead { padding-left: 4px; }
.ptabs2 { display: flex; line-height: 22px; height: 22px; padding-left: 4px; }
.ptabs2 span { width: 38px; white-space: nowrap; letter-spacing: -0.7px; }
.ptabs2 span + span { padding-left: 3px; }
.docs { flex: 1; margin-left: 3px; padding: 5px 4px 0 3px; display: flex; flex-direction: column; }
.viewport { position: relative; width: 1128px; height: 521px; border: 1px solid #aca899; background: #fff; padding: 1px; flex: none; }
.scene { position: relative; }
.prompt { position: absolute; left: 11px; top: 9px; margin: 0; font-size: 13px; letter-spacing: 0.090px; color: #7b7b7b; white-space: nowrap; }
.doctabs { display: flex; justify-content: space-between; height: 25px; margin: 3px -4px 0 -3px; border-left: 1px solid #2d5c86; border-top: 1px solid #2d5c86; padding-left: 3px; background: #f7f8fd; }
.doctab { display: flex; align-items: center; width: 69px; height: 21px; border: solid #2d5c86; border-width: 0 1px 1px; padding-left: 3px; gap: 2px; color: #2d5c86; }
.doctab b { margin-right: 1px; letter-spacing: -0.6px; }
.docnav { display: flex; gap: 8px; align-items: center; height: 20px; padding-right: 5px; }
.status { height: 4px; background: #2d5c86; }
.triad text { font: bold 11px "DejaVu Sans", sans-serif; letter-spacing: 0; }
.brand text { fill: #505050; letter-spacing: 0; }
.b1 { font: 700 35px Inter, sans-serif; } .b2 { font: 700 18px Inter, sans-serif; } .b3 { font: 700 18px Inter, sans-serif; }
.face { fill: #d9b1da; fill-rule: evenodd; }
.edge { fill: none; stroke: #54254f; stroke-width: .9; }
```
FILE: part.js
```js
// Draws the drone frame: a flat face with cutouts, extruded along DEPTH.
(function () {
  var NS = 'http://www.w3.org/2000/svg';
  var part = document.getElementById('part');
  var DEPTH = [-3, 5.3];
  var CX = 1363.8, CY = 805.4;

  var outline = 'M490 186.700L501.700 186.700L528 199.300L531.700 197.300L587.300 225L589.300 228.300C598 233 607 235.500 616.700 235L625 232.300L628.300 227.300L664 208.300L670 211L685 203.300L698.300 204L724 216.700L727.300 214.700L782.300 241.700L783.300 246L806.700 256.700L813 260L817.300 265L822.700 275L828.300 289L831.700 290L850.700 335L850 340L856.700 356.700L861 401.700L868.300 404L880 436.700L878.300 440L906.700 480L916.700 504L922.700 506.700L940.700 550.700L940 554L946.700 573.300L946 578L940 583L928.300 590L926 595L893 611.700L888 610.700L873 619.300L861 619L835.800 606.100L832 608L776.500 580.400L774.500 577C762 571 752 569.500 740 571L735 574L733 577L699.800 597L694 594.500L679 602L665.500 601.400L639.500 588.500L636.500 590.500L581.500 564L580.500 559.500L557 548.700L550 545L546 540L541 530L535.500 516L532 515L513 470.400L515 465L512 459L508 455.700L491.700 445L483 431.700L478 425L465 423L461 420L458 413L435 355L434 346.700L436.700 343.300L445 342.300L444 328.300L450 320L450 313L443.300 301.700L425 255L426 252L417 231L418 226.700L431.700 218L435 210.700L470 192.300L475 194.300Z';

  var openings = [
    'M447.300 275C443 262 442.500 240 449 229C456 217 470 209 490 207.700C510 207.500 530 213 552.500 220.500L537.300 269.700L523 268.700L519.500 279.500Z',
    'M562 225C592 238 617 263 628 290C635 305 637.500 318 636 332C634 345 628 353 616.500 357L562.300 299L562.700 291L551 276.700Z',
    'M450 282.700L523.300 290.300L534 303.500L551.700 304.700L610.500 359.300C606 363.500 600 364.500 590 365.500C560 366.500 520 355 495 338C473 322 456 302 450 282.700Z'
  ];
  // x1, y1, x2, y2, width
  var slots = [[449, 210.500, 467, 203, 2.800], [545.500, 209.500, 572.500, 222.500, 1.600], [435, 267, 443.500, 288.500, 1.800],
    [507.500, 348.500, 533.500, 361.500, 1.600], [611, 367.500, 629, 359, 2.800]];
  var midSlot = [632.500, 284.500, 641.500, 306.500, 1.800];
  var small = [500, 194.3, 429, 233.3, 622.7, 261.7, 466.7, 324.3, 495.7, 365, 495, 373.3, 531.7, 376, 576, 374.3, 695, 211.7,
    651, 328.3, 806, 265.7, 844, 355.7, 846.7, 389.3, 770.7, 391.7, 506.7, 401, 515, 410, 543, 404, 592, 414, 518, 448,
    786.7, 430.7, 870, 446.7, 712.7, 476.7, 896.7, 482, 556.7, 539, 667, 594, 740.7, 544];
  var medium = [634.500, 371, 651, 382.700, 705, 376.700, 697, 386.700, 666.700, 419, 659, 428, 712.700, 423, 729, 435];
  var cutouts = [
    '450.7,335 451.7,329 456.7,326.7 460,331 464.3,339.3 461.7,342 455,340.7',
    '474.3,339.3 480,338.3 488.3,349.3 490.7,355 486.7,355.7 481.7,349.3',
    '501,355 503,352.5 535,368.500 536.5,371 533,373 527,371.5 502,358.5',
    '459.3,363.3 462.7,361 467.3,362.7 471.7,370.7 464,370',
    '475,366 477,364.500 481,364.500 488,380.7 476.5,380',
    '446.7,368.7 455,368.7 467.3,398 459.3,397',
    '480.7,391 490,390.7 493,393 498.3,407.3 491.7,405.5 488,397',
    '474.3,398.3 481.7,398.3 487.7,408.3 478,406.5',
    '510.7,418.5 513,417 515.7,418 522.7,430.7 513.3,434 512,427',
    '490,429.3 500,427.7 507.3,444.3 501.7,442.7',
    '528.3,418.3 538.3,408.3 555,410 553.3,413.3 531.7,424 528,422',
    '575,394 587.7,385.7 595.7,404',
    '603.3,383.3 625.7,371 627,378 624,388 629,394.500 606.7,392.5',
    '610.7,400.7 630,401 635,411 642.7,415 647.3,426 613.3,410',
    '636,389.3 656.7,400 643.3,407.7',
    '643.3,350.5 650,343.5 656,342.5 679,353.500 679,356 676,357 645,353',
    '635.500,358.3 695,365 696,369 637,363.500',
    '663.3,379.3 681.7,380.7 676,388.3',
    '707.3,405 719.3,396.7 727.3,415',
    '682.3,425 687.7,416.7 700.7,426.7',
    '718,384 719,381.500 722,381.500 759,399 761.500,403 760,406 737,403',
    '740.7,412.7 763.3,413.3 767.3,417 767,421 741.7,431.7 737,431 736,428',
    '667.7,436.7 727.3,441.7 728.3,446.7 668.5,441.5',
    '684.3,449 720,451.7 718.3,456.7 708.3,463.3 702,463 687,456',
    '782.7,405 810,390 814.500,391 816.500,396 806,405 805,410.500 785,409.500',
    '787.7,416 790,414.3 806.7,415 813.3,424 833.3,433.3 835.7,438.3 831.7,440 795,421.7',
    '823.3,409.3 827.3,404 852.7,402.3 852,414 826.7,411',
    '828.3,419.500 853.3,420 866,434 840,427.3',
    '826.7,381.7 838.3,374 849.3,374.3 846,384',
    '856,417.7 865,404 874,430',
    '856.7,452.7 873.3,451.7 885.7,463.3 868.3,457.3',
    '602.3,237.7 625,240 616.7,248.3',
    '739,563.3 745,556.7 761.7,567.3 760,569'
  ];

  function sample(d) {
    var p = document.createElementNS(NS, 'path');
    p.setAttribute('d', d);
    var len = p.getTotalLength(), n = Math.max(8, Math.round(len / 0.8)), out = [];
    for (var i = 0; i < n; i++) {
      var q = p.getPointAtLength(len * i / n);
      out.push([q.x, q.y]);
    }
    return out;
  }
  function map(pts, fn) { return pts.map(function (p) { return fn(p[0], p[1]); }); }
  function shift(x, y) { return [x + 89.7, y + 214.7]; }
  function flip(x, y) { return [CX - x, CY - y]; }
  function ellipse(cx, cy, rx, ry) {
    var o = [], c = Math.cos(0.45), s = Math.sin(0.45), n = rx > 4 ? 40 : 16;
    for (var i = 0; i < n; i++) {
      var t = i / n * Math.PI * 2, x = rx * Math.cos(t), y = ry * Math.sin(t);
      o.push([cx + x * c - y * s, cy + x * s + y * c]);
    }
    return o;
  }
  function slot(s) {
    var dx = s[2] - s[0], dy = s[3] - s[1], l = Math.hypot(dx, dy), w = s[4] / 2;
    var nx = -dy / l * w, ny = dx / l * w;
    return [[s[0] + nx, s[1] + ny], [s[2] + nx, s[3] + ny], [s[2] - nx, s[3] - ny], [s[0] - nx, s[1] - ny]];
  }

  var loops = [sample(outline)];
  function four(pts) {
    var b = map(pts, shift);
    loops.push(pts, b, map(pts, flip), map(b, flip));
  }
  openings.forEach(function (d) { four(sample(d)); });
  var detailStart = loops.length, i;
  slots.forEach(function (s) { four(slot(s)); });
  loops.push(slot(midSlot), map(slot(midSlot), shift));
  four(ellipse(540, 287, 6.800, 5));
  loops.push(ellipse(682.300, 402.300, 7.800, 5.500));
  for (i = 0; i < small.length; i += 2) loops.push(ellipse(small[i], small[i + 1], 2.700, 1.900));
  for (i = 0; i < medium.length; i += 2) loops.push(ellipse(medium[i], medium[i + 1], 3.800, 2.700));
  cutouts.forEach(function (c) { loops.push(sample('M' + c.split(' ').join('L') + 'Z')); });

  // Wall tone by facing direction: dark underneath, bright toward lower left.
  function tone(nx, ny) {
    var a = Math.atan2(-nx, ny) * 180 / Math.PI;
    var t = a < 0 ? 0 : a < 30 ? a / 30 : a < 65 ? 1 : Math.max(0.25, 1 - (a - 65) / 45);
    return Math.round(t * 8);
  }
  function f(p) { return p[0].toFixed(1) + ' ' + p[1].toFixed(1); }
  function off(p) { return [p[0] + DEPTH[0], p[1] + DEPTH[1]]; }
  function el(parent, name, attrs) {
    var e = document.createElementNS(NS, name);
    Object.keys(attrs).forEach(function (k) { e.setAttribute(k, attrs[k]); });
    parent.appendChild(e);
    return e;
  }

  var face = '';
  loops.forEach(function (pts, k) {
    var area = 0, n = pts.length, walls = {}, rims = '', prev = null;
    var contour = 'M' + pts.map(f).join('L') + 'Z';
    pts.forEach(function (p, j) { var q = pts[(j + 1) % n]; area += p[0] * q[1] - q[0] * p[1]; });
    var sign = (area > 0 ? 1 : -1) * (k === 0 ? 1 : -1);
    for (var j = 0; j < n; j++) {
      var p = pts[j], q = pts[(j + 1) % n], dx = q[0] - p[0], dy = q[1] - p[1], l = Math.hypot(dx, dy) || 1;
      var nx = sign * dy / l, ny = -sign * dx / l;
      if (nx * DEPTH[0] + ny * DEPTH[1] > 0) {
        var t = tone(nx, ny);
        walls[t] = (walls[t] || '') + 'M' + f(p) + 'L' + f(q) + 'L' + f(off(q)) + 'L' + f(off(p)) + 'Z';
        rims += 'M' + f(off(p)) + 'L' + f(off(q));
        if (prev && prev[0] * nx + prev[1] * ny < 0.93) rims += 'M' + f(p) + 'L' + f(off(p));
      }
      prev = [nx, ny];
    }
    var g = el(part, 'g', {});
    if (k > 0) {
      el(el(part, 'clipPath', { id: 'hole' + k }), 'path', { d: contour });
      g.setAttribute('clip-path', 'url(#hole' + k + ')');
    }
    var dim = k >= detailStart ? 0.86 : 1;
    Object.keys(walls).forEach(function (t) {
      var u = t / 8 * (dim < 1 ? 0.6 : 1);
      var c = 'rgb(' + [142 + 90 * u, 118 + 70 * u, 144 + 90 * u].map(function (v) { return Math.round(v * dim); }).join(',') + ')';
      el(g, 'path', { d: walls[t], fill: c, stroke: c, 'stroke-width': '.4' });
    });
    el(g, 'path', { d: rims, 'class': 'edge' });
    face += contour;
  });
  el(part, 'path', { d: face, 'class': 'face' });
  el(part, 'path', { d: face, 'class': 'edge' });
})();
```
